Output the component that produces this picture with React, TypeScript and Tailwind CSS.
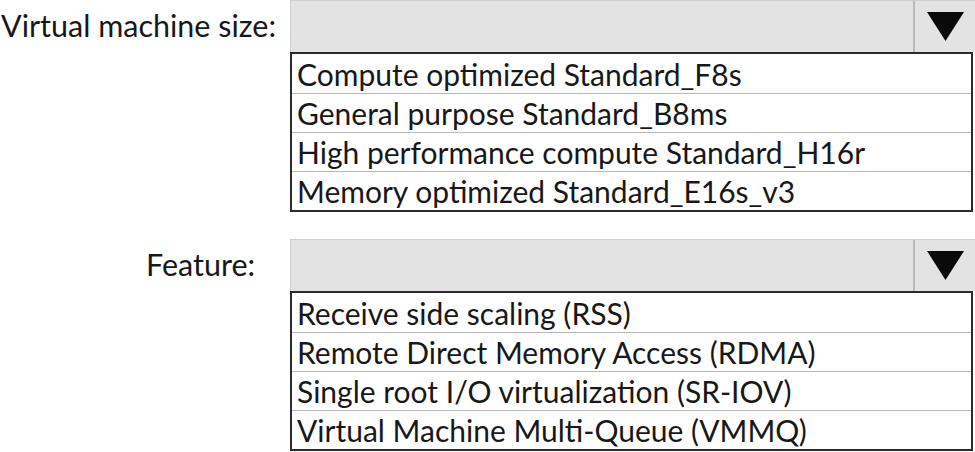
const SIZES = [
  "Compute optimized Standard_F8s",
  "General purpose Standard_B8ms",
  "High performance compute Standard_H16r",
  "Memory optimized Standard_E16s_v3",
];

const FEATURES = [
  "Receive side scaling (RSS)",
  "Remote Direct Memory Access (RDMA)",
  "Single root I/O virtualization (SR-IOV)",
  "Virtual Machine Multi-Queue (VMMQ)",
];

function Dropdown({ label, items, labelClass }: { label: string; items: string[]; labelClass: string }) {
  return (
    <div className="flex">
      {/* label column */}
      <div className="w-[290px] shrink-0 h-[51px] flex items-center">
        <span className={`whitespace-nowrap text-[30.5px] ${labelClass}`}>{label}</span>
      </div>

      <div className="flex-1 flex flex-col">
        {/* closed select */}
        <div className="flex h-[52px] bg-[#e3e3e3] border-t border-l border-[#cdcdcd]">
          <div className="flex-1" />
          <div className="w-[62px] border-l-2 border-[#b9b9b9] flex items-center justify-center">
            <svg width="37" height="29" viewBox="0 0 37 29">
              <polygon points="0,0 37,0 18.5,29" fill="#0a0a0a" />
            </svg>
          </div>
        </div>

        {/* options */}
        <ul className="mr-[2px] border-2 border-[#2b2b2b] bg-white">
          {items.map((item, i) => (
            <li
              key={item}
              className={`h-[39px] flex items-center pl-[5px] whitespace-nowrap ${
                i > 0 ? "border-t border-[#b8b8b8]" : ""
              }`}
            >
              {item}
            </li>
          ))}
        </ul>
      </div>
    </div>
  );
}

export default function App() {
  return (
    <div className="w-[975px] h-[452px] overflow-hidden bg-white font-['Lato',sans-serif] text-[30px] leading-none text-[#181818]">
      <div className="flex flex-col gap-[27px]">
        <Dropdown label="Virtual machine size:" items={SIZES} labelClass="ml-[1px]" />
        <Dropdown label="Feature:" items={FEATURES} labelClass="ml-[146px]" />
      </div>
    </div>
  );
}
